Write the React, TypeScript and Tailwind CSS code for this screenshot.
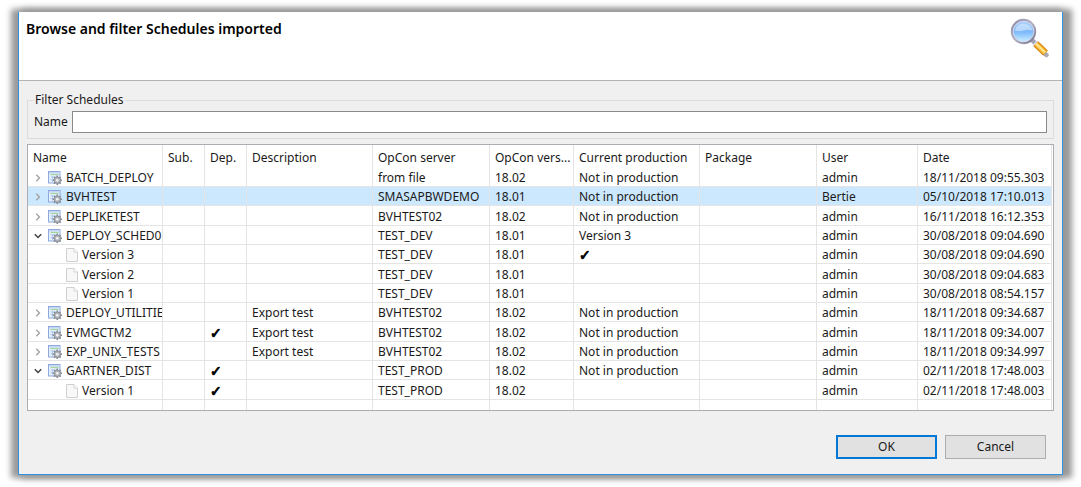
import { useState } from "react";

type Row = {
  id: number;
  name: string;
  dep?: boolean;
  description?: string;
  server: string;
  version: string;
  production?: string;
  current?: boolean;
  user: string;
  date: string;
  parent?: number;
  expanded?: boolean;
};

const ROWS: Row[] = [
  { id: 1, name: "BATCH_DEPLOY", server: "from file", version: "18.02", production: "Not in production", user: "admin", date: "18/11/2018 09:55.303" },
  { id: 2, name: "BVHTEST", server: "SMASAPBWDEMO", version: "18.01", production: "Not in production", user: "Bertie", date: "05/10/2018 17:10.013" },
  { id: 3, name: "DEPLIKETEST", server: "BVHTEST02", version: "18.02", production: "Not in production", user: "admin", date: "16/11/2018 16:12.353" },
  { id: 4, name: "DEPLOY_SCHED01", server: "TEST_DEV", version: "18.01", production: "Version 3", user: "admin", date: "30/08/2018 09:04.690", expanded: true },
  { id: 5, name: "Version 3", server: "TEST_DEV", version: "18.01", current: true, user: "admin", date: "30/08/2018 09:04.690", parent: 4 },
  { id: 6, name: "Version 2", server: "TEST_DEV", version: "18.01", user: "admin", date: "30/08/2018 09:04.683", parent: 4 },
  { id: 7, name: "Version 1", server: "TEST_DEV", version: "18.01", user: "admin", date: "30/08/2018 08:54.157", parent: 4 },
  { id: 8, name: "DEPLOY_UTILITIES", description: "Export test", server: "BVHTEST02", version: "18.02", production: "Not in production", user: "admin", date: "18/11/2018 09:34.687" },
  { id: 9, name: "EVMGCTM2", dep: true, description: "Export test", server: "BVHTEST02", version: "18.02", production: "Not in production", user: "admin", date: "18/11/2018 09:34.007" },
  { id: 10, name: "EXP_UNIX_TESTS", description: "Export test", server: "BVHTEST02", version: "18.02", production: "Not in production", user: "admin", date: "18/11/2018 09:34.997" },
  { id: 11, name: "GARTNER_DIST", dep: true, server: "TEST_PROD", version: "18.02", production: "Not in production", user: "admin", date: "02/11/2018 17:48.003", expanded: true },
  { id: 12, name: "Version 1", dep: true, server: "TEST_PROD", version: "18.02", user: "admin", date: "02/11/2018 17:48.003", parent: 11 },
];

const COLUMNS = [
  { label: "Name", width: "w-[135px]" },
  { label: "Sub.", width: "w-[42px]" },
  { label: "Dep.", width: "w-[42px]" },
  { label: "Description", width: "w-[126px]" },
  { label: "OpCon server", width: "w-[117px]" },
  { label: "OpCon vers...", width: "w-[84px]" },
  { label: "Current production", width: "w-[126px]" },
  { label: "Package", width: "w-[117px]" },
  { label: "User", width: "w-[101px]" },
  { label: "Date", width: "w-auto" },
];

function SearchIcon() {
  return (
    <svg className="size-10 shrink-0" viewBox="0 0 40 40" aria-hidden="true">
      <defs>
        <linearGradient id="lens" x1="0" y1="0" x2="0" y2="1">
          <stop offset="0" stopColor="#b4d6fc" />
          <stop offset="0.45" stopColor="#86bbf9" />
          <stop offset="0.52" stopColor="#7cb8fb" />
          <stop offset="1" stopColor="#d2f6ff" />
        </linearGradient>
        <linearGradient id="rim" x1="0" y1="0" x2="1" y2="1">
          <stop offset="0" stopColor="#8b8ca6" />
          <stop offset="0.5" stopColor="#b4b3c8" />
          <stop offset="1" stopColor="#74748c" />
        </linearGradient>
        <linearGradient id="handle" gradientUnits="userSpaceOnUse" x1="28" y1="34" x2="34" y2="28">
          <stop offset="0" stopColor="#d87f08" />
          <stop offset="0.3" stopColor="#f8b12a" />
          <stop offset="0.55" stopColor="#fff0a8" />
          <stop offset="0.75" stopColor="#fbb422" />
          <stop offset="1" stopColor="#d47a06" />
        </linearGradient>
      </defs>
      <path d="M21.500 21.500l4.500 4.500" stroke="#a3a2b6" strokeWidth="4.500" />
      <path d="M34.500 35.500l2 1.500" stroke="#a9a9b8" strokeWidth="4.500" strokeLinecap="round" />
      <path d="M25.500 25.500l10 9.500" stroke="#c97407" strokeWidth="6.800" />
      <path d="M25.700 25.700l9.600 9.100" stroke="url(#handle)" strokeWidth="5.400" />
      <path d="M23 27.500l4.500-4.500" stroke="#dddcea" strokeWidth="1.500" />
      <circle cx="13.500" cy="13.500" r="11.400" fill="url(#lens)" stroke="url(#rim)" strokeWidth="2.600" />
      <circle cx="13.500" cy="13.500" r="10.300" fill="none" stroke="#dfe5f7" strokeWidth="0.800" />
      <path d="M4.800 12.500a9 9 0 0 1 17.400 0q-4.500-1.500-8.700 0t-8.700 0z" fill="#e3f2ff" opacity="0.500" />
    </svg>
  );
}

function ScheduleIcon() {
  return (
    <svg className="h-[14px] w-[14px] shrink-0" viewBox="0 0 14 14" aria-hidden="true">
      <rect x="0.500" y="0.500" width="11.500" height="11.500" fill="#e4effd" stroke="#8fa9de" />
      <rect x="1" y="1" width="10.500" height="1.500" fill="#c3d6f6" />
      <path d="M2.500 3.500h8" stroke="#a4d89b" strokeWidth="1.200" />
      <path d="M2.500 6h7M2.500 8.500h4M4.500 5v6" stroke="#b4cdf0" />
      <g stroke="#84888f" strokeWidth="1.600">
        <path d="M9.300 4.600v9.400M4.600 9.300h9.400M6 6l6.600 6.600M12.600 6l-6.600 6.600" />
      </g>
      <circle cx="9.300" cy="9.300" r="3.200" fill="#b4b7bc" stroke="#888c93" strokeWidth="0.800" />
      <circle cx="9.300" cy="9.300" r="1.300" fill="#f4f5f7" />
    </svg>
  );
}

function PageIcon() {
  return (
    <svg className="h-[14px] w-3 shrink-0" viewBox="0 0 12 14" aria-hidden="true">
      <path d="M.5.5h7.500l3.500 3.500v9.500h-11z" fill="#f8f8f8" stroke="#cfcfcf" />
      <path d="M8 .5v3.500h3.500" fill="#fff" stroke="#d2d2d2" />
    </svg>
  );
}

function Chevron({ open }: { open: boolean }) {
  return (
    <svg className="size-2" viewBox="0 0 8 8" fill="none" aria-hidden="true">
      {open ? (
        <path d="M.8 2.300l3.200 3.200 3.200-3.200" stroke="#404040" strokeWidth="1.500" />
      ) : (
        <path d="M2.300.8l3.200 3.200-3.200 3.200" stroke="#a0a0a0" strokeWidth="1.300" />
      )}
    </svg>
  );
}

function Check() {
  return (
    <span className="block font-['DejaVu_Sans',sans-serif] text-[14px] leading-4 font-bold text-black [-webkit-text-stroke:1px_black]">
      ✓
    </span>
  );
}

const CELL = "overflow-hidden whitespace-nowrap border-b border-r border-[#e4e4e4] p-0 pt-[2px] pl-[5px]";

export default function App() {
  const [filter, setFilter] = useState("");
  const [selected, setSelected] = useState(2);
  const [open, setOpen] = useState<number[]>(ROWS.filter((r) => r.expanded).map((r) => r.id));

  const toggle = (id: number) =>
    setOpen((ids) => (ids.includes(id) ? ids.filter((i) => i !== id) : [...ids, id]));

  const matches = (row: Row) => row.name.toLowerCase().includes(filter.toLowerCase());
  const visible = ROWS.filter((row) => {
    if (row.parent === undefined) return matches(row);
    const parent = ROWS.find((r) => r.id === row.parent);
    return parent !== undefined && matches(parent) && open.includes(parent.id);
  });

  return (
    <div className="bg-white pt-3 pr-[18px] pb-3 pl-[18px] font-['Noto_Sans','Open_Sans',sans-serif] text-[12px] leading-4 text-[#1a1a1a]">
      <main className="border-x border-b border-[#3092e0] bg-[#f0f0f0] shadow-[-4px_0_6px_3px_#999999,6px_0_6px_3px_#999999]">
        <header className="flex h-[69px] items-start justify-between border-b border-[#b4b4b4] bg-white pt-[6px] pr-3 pl-[7px]">
          <h1 className="pt-[3px] text-[14px] leading-4 font-semibold text-black">Browse and filter Schedules imported</h1>
          <SearchIcon />
        </header>

        <div className="px-2 pt-[11px]">
          <fieldset className="border border-[#dcdcdc] px-[6px] pb-[5px]">
            <legend className="px-px">Filter Schedules</legend>
            <div className="flex items-center gap-1 pt-[3px]">
              <label htmlFor="schedule-name">Name</label>
              <input
                id="schedule-name"
                type="text"
                value={filter}
                onChange={(e) => setFilter(e.target.value)}
                className="h-[22px] min-w-0 flex-1 border border-[#8a8a8a] bg-white px-1 outline-none"
              />
            </div>
          </fieldset>

          <div className="mt-[5px] border border-[#abadb3] bg-white pr-px">
            <table className="w-full table-fixed border-separate border-spacing-0">
              <thead>
                <tr className="h-[23px]">
                  {COLUMNS.map((c) => (
                    <th
                      key={c.label}
                      scope="col"
                      className={`${c.width} overflow-hidden border-r border-[#e4e4e4] p-0 pt-[2px] pl-[5px] text-left font-normal whitespace-nowrap`}
                    >
                      {c.label}
                    </th>
                  ))}
                </tr>
              </thead>
              <tbody>
                {visible.map((row) => (
                  <tr
                    key={row.id}
                    onClick={() => setSelected(row.id)}
                    className={`h-[19px] nth-[3n]:h-5 ${row.id === selected ? "bg-[#cce8ff]" : "bg-white"}`}
                  >
                    <td className={CELL}>
                      {row.parent === undefined ? (
                        <div className="flex items-center gap-1 pl-px">
                          <button
                            type="button"
                            aria-label={row.name}
                            aria-expanded={open.includes(row.id)}
                            onClick={() => toggle(row.id)}
                            className="mr-[2px] shrink-0"
                          >
                            <Chevron open={open.includes(row.id)} />
                          </button>
                          <ScheduleIcon />
                          <span>{row.name}</span>
                        </div>
                      ) : (
                        <div className="flex items-center gap-1 pl-[33px]">
                          <PageIcon />
                          <span>{row.name}</span>
                        </div>
                      )}
                    </td>
                    <td className={CELL} />
                    <td className={CELL}>{row.dep && <Check />}</td>
                    <td className={CELL}>{row.description}</td>
                    <td className={CELL}>{row.server}</td>
                    <td className={CELL}>{row.version}</td>
                    <td className={CELL}>{row.current ? <Check /> : row.production}</td>
                    <td className={CELL} />
                    <td className={CELL}>{row.user}</td>
                    <td className={CELL}>{row.date}</td>
                  </tr>
                ))}
                <tr className="h-[10px]" aria-hidden="true">
                  {COLUMNS.map((c) => (
                    <td key={c.label} className="border-r border-[#e4e4e4] p-0" />
                  ))}
                </tr>
              </tbody>
            </table>
          </div>
        </div>

        <footer className="flex justify-end gap-2 pt-6 pr-4 pb-[15px]">
          <button type="button" className="h-6 w-[101px] border-2 border-[#0078d7] bg-[#e1e1e1]">
            OK
          </button>
          <button type="button" className="h-6 w-[101px] border border-[#adadad] bg-[#e1e1e1]">
            Cancel
          </button>
        </footer>
      </main>
    </div>
  );
}
